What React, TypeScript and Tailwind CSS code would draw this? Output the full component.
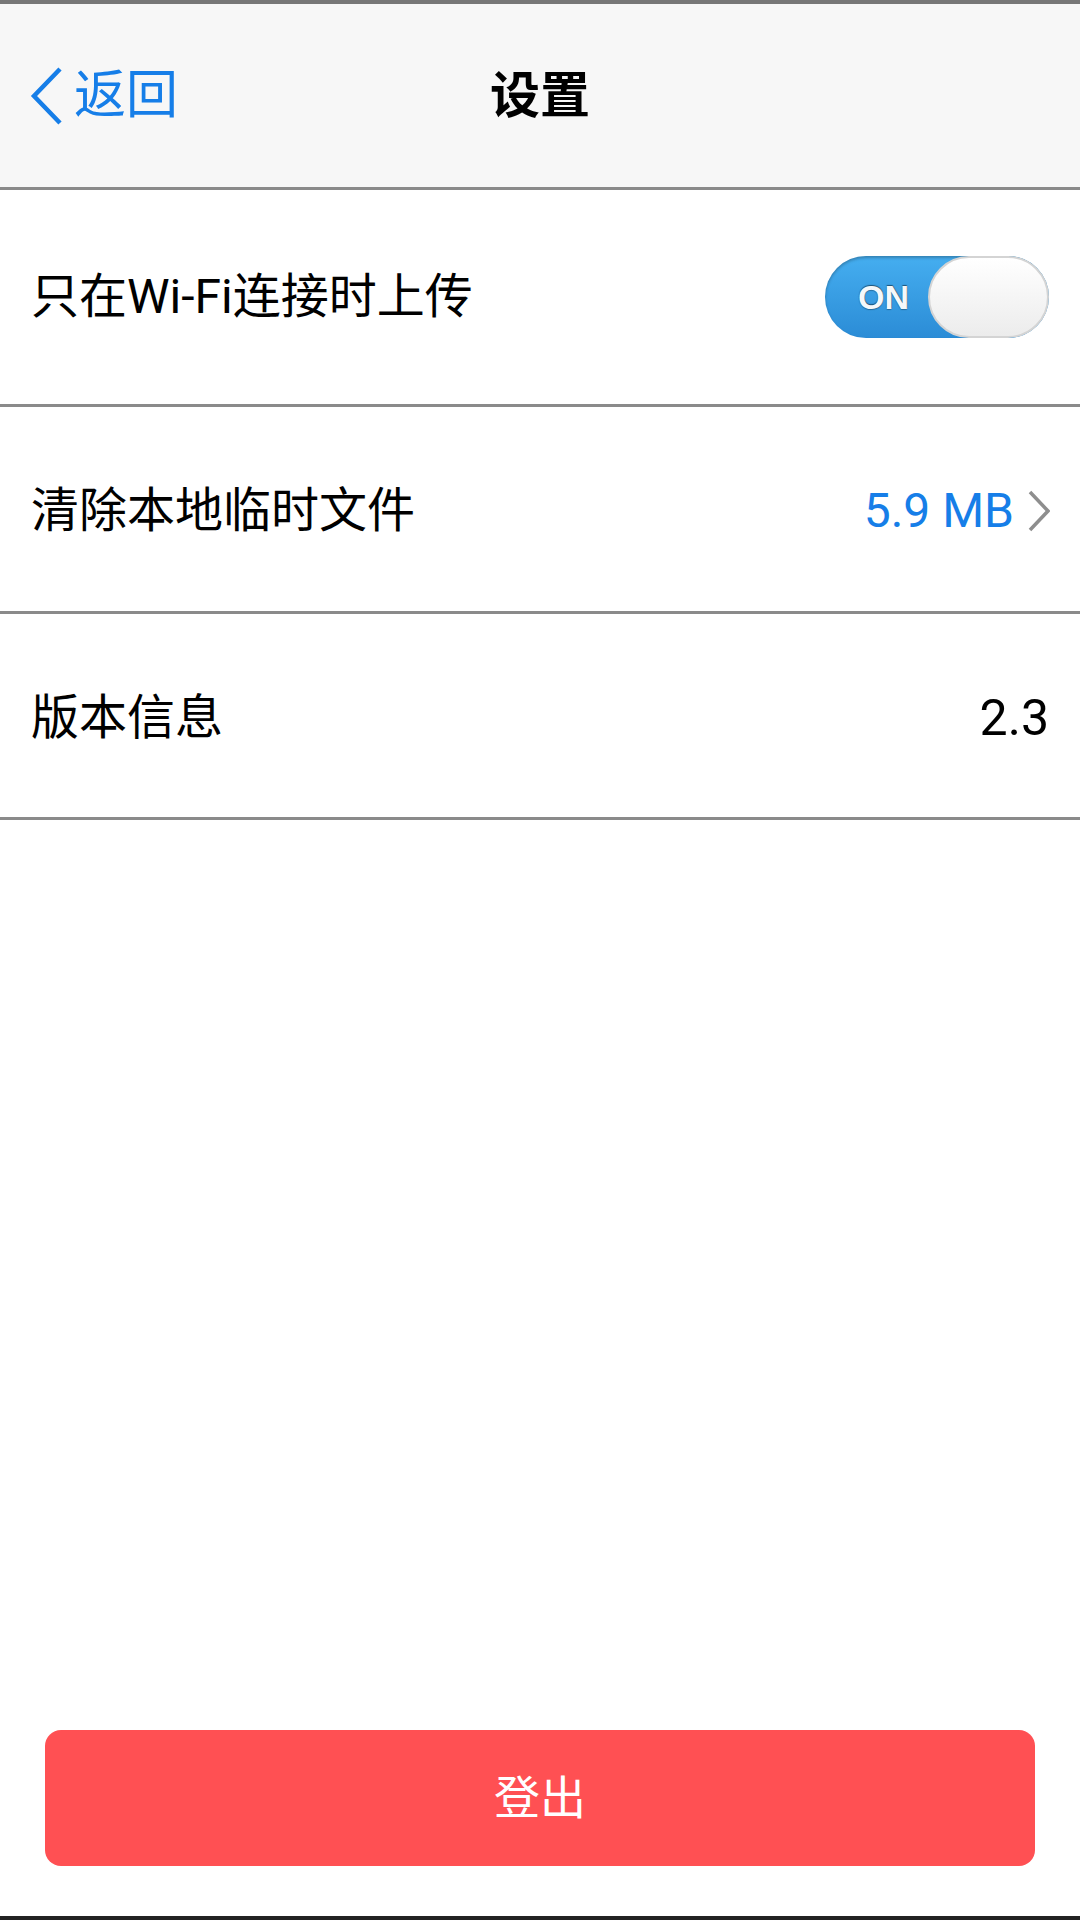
import { useState } from 'react';

const CJK = "font-['Roboto','Noto_Sans_CJK_SC',sans-serif]";

function Toggle({ on, onChange }: { on: boolean; onChange: () => void }) {
  return (
    <button
      onClick={onChange}
      className="relative h-[82px] w-[224px] shrink-0 rounded-full bg-gradient-to-b from-[#45aef0] to-[#2b8cd6] shadow-[inset_0_2px_3px_rgba(0,0,0,0.25)]"
    >
      <span className="absolute left-[33px] top-1/2 -translate-y-1/2 font-['Liberation_Sans',sans-serif] text-[34px] font-bold leading-none text-[#f4f8fb] [text-shadow:0_-1px_1px_rgba(0,0,0,0.5),0_1px_1px_rgba(0,0,0,0.3)]">
        {on ? 'ON' : 'OFF'}
      </span>
      <span className="absolute right-0 top-0 h-[82px] w-[121px] rounded-full border-2 border-[#d4d4d4] bg-gradient-to-b from-[#ffffff] to-[#ececec]" />
    </button>
  );
}

function Chevron() {
  return (
    <svg width="22" height="42" viewBox="0 0 22 42" className="shrink-0">
      <polyline points="2,2 20,21 2,40" fill="none" stroke="#8e8e8e" strokeWidth="3.5" />
    </svg>
  );
}

export default function App() {
  const [wifiOnly, setWifiOnly] = useState(true);

  return (
    <div className={`flex min-h-[1920px] w-[1080px] flex-col bg-white ${CJK}`}>
      {/* nav bar */}
      <header className="relative flex h-[190px] items-center border-t-4 border-b-[3px] border-t-[#777777] border-b-[#8a8a8a] bg-[#f7f7f7] px-[30px]">
        <button className="flex items-center gap-[10px] text-[#167ee8]">
          <svg width="34" height="60" viewBox="0 0 34 60">
            <polyline points="30,3 4,30 30,57" fill="none" stroke="#167ee8" strokeWidth="4.5" />
          </svg>
          <span className="text-[52px] leading-none">返回</span>
        </button>
        <h1 className="absolute left-1/2 -translate-x-1/2 text-[50px] font-bold leading-none text-black">设置</h1>
      </header>

      {/* settings list */}
      <div className="flex h-[217px] items-center justify-between border-b-[3px] border-[#8a8a8a] px-[31px]">
        <span className="text-[48px] leading-none text-black">只在Wi-Fi连接时上传</span>
        <Toggle on={wifiOnly} onChange={() => setWifiOnly((v) => !v)} />
      </div>
      <div className="flex h-[207px] items-center justify-between border-b-[3px] border-[#8a8a8a] pl-[31px] pr-[30px]">
        <span className="mt-[4px] text-[48px] leading-none text-black">清除本地临时文件</span>
        <div className="mt-[4px] flex items-center gap-[14px]">
          <span className="font-['Roboto',sans-serif] text-[48px] leading-none text-[#167ee8]">5.9 MB</span>
          <Chevron />
        </div>
      </div>
      <div className="flex h-[206px] items-center justify-between border-b-[3px] border-[#8a8a8a] px-[31px]">
        <span className="mt-[4px] text-[48px] leading-none text-black">版本信息</span>
        <span className="mt-[4px] font-['Roboto',sans-serif] text-[50px] leading-none text-black">2.3</span>
      </div>

      <div className="flex-1" />

      <div className="px-[45px] pb-[50px]">
        <button className="flex h-[136px] w-full items-center justify-center rounded-[16px] bg-[#ff5053] text-[46px] leading-none text-white">
          登出
        </button>
      </div>
      <div className="h-[4px] bg-[#222222]" />
    </div>
  );
}
